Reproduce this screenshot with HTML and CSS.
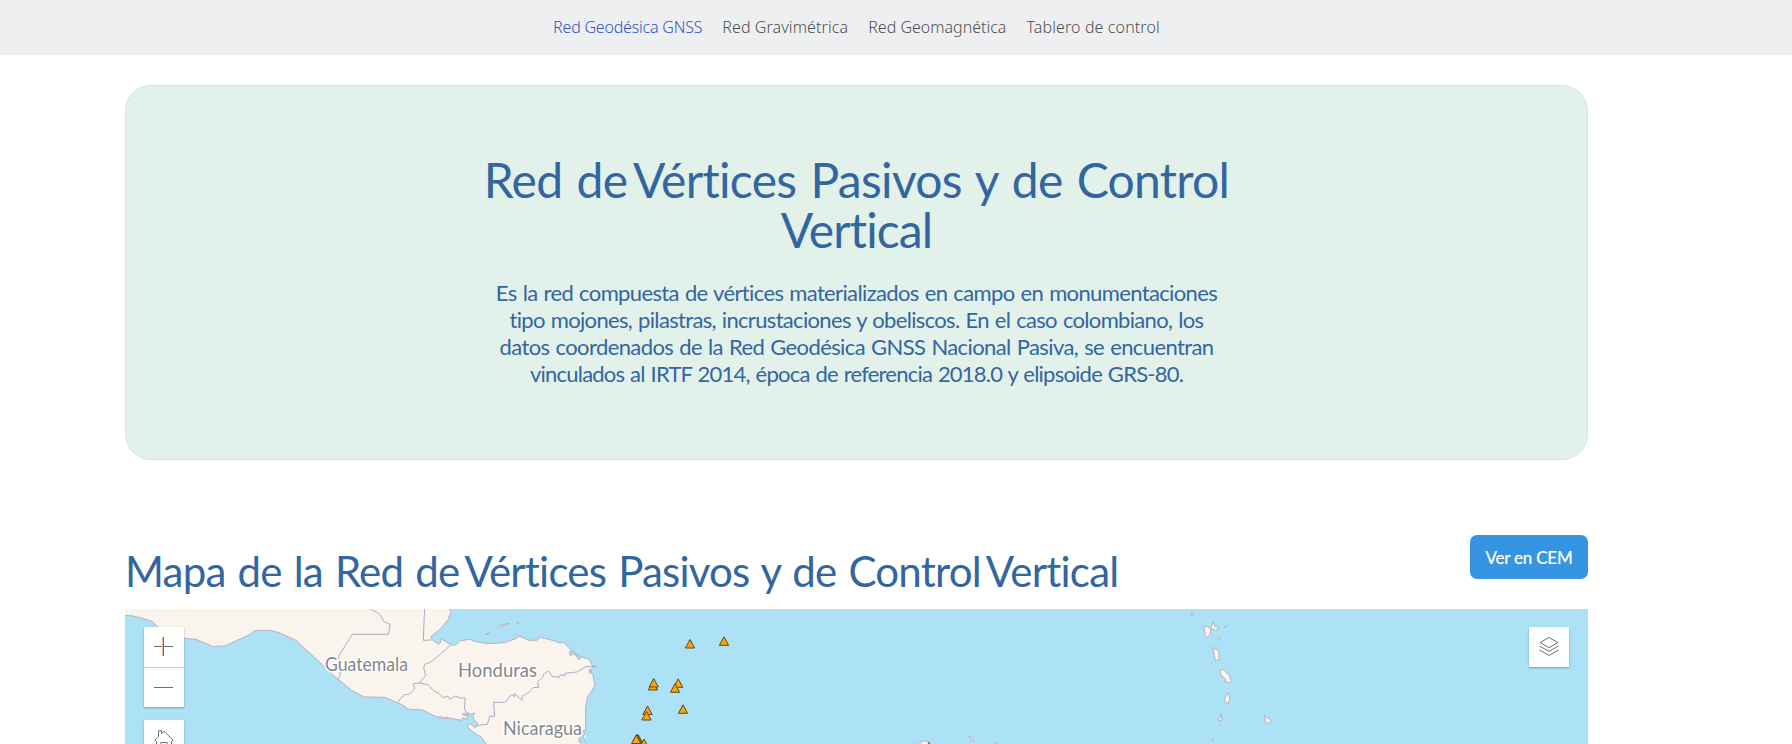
FILE: index.html
```html
<!DOCTYPE html>
<html lang="es">
<head>
<meta charset="utf-8">
<title>Red Geodésica GNSS</title>
<link rel="stylesheet" href="styles.css">
</head>
<body>
<header class="topbar">
  <nav class="nav">
    <a class="nav-link active">Red Geodésica GNSS</a>
    <a class="nav-link grav">Red Gravimétrica</a>
    <a class="nav-link geom">Red Geomagnética</a>
    <a class="nav-link tab">Tablero de control</a>
  </nav>
</header>
<main class="page">
  <section class="hero">
    <h1 class="hero-title"><span class="t1">Red de<span class="tight"> </span>Vértices Pasivos y de Control</span><br><span class="t2">Vertical</span></h1>
    <p class="hero-text"><span class="p1">Es la red compuesta de vértices materializados en campo en monumentaciones</span><br><span class="p2">tipo mojones, pilastras, incrustaciones y obeliscos. En el caso colombiano, los</span><br><span class="p3">datos coordenados de la Red Geodésica GNSS Nacional Pasiva, se encuentran</span><br><span class="p4">vinculados al IRTF 2014, época de referencia 2018.0 y elipsoide GRS-80.</span></p>
  </section>
  <section class="map-section">
    <div class="map-head">
      <h2 class="map-title">Mapa de la Red de<span class="tight"> </span>Vértices Pasivos y de Control<span class="tight"> </span>Vertical</h2>
      <a class="cem-button">Ver en CEM</a>
    </div>
    <div class="map">
      <svg class="map-canvas" viewBox="125 609 1463 135">
        <g transform="translate(340 600) scale(.33333)">
          <g class="land">
            <path d="M-650 20V47L-625 47L-600 53L-563 64L-548 80L-500 108L-468 115L-432 118L-380 140L-362 138L-348 139L-275 106L-255 92L-212 91L-185 97L-132 121L-6 238L35 271L72 291L135 292L172 308L197 320L200 327L248 330L284 348L300 355L325 354L365 361L370 352L380 360L383 348L366 344L371 340L384 345L384 336L391 343L404 339L399 349L402 362L412 368L411 379L403 382L397 375L388 371L382 381L411 405L423 410L445 440H715L725 430L718 426L717 414L726 407L725 394L737 390L737 320L743 291L764 258L759 225L747 215L757 203L769 199L757 197L748 178L721 170L688 146L673 128L655 128L642 122L602 112L590 121L568 121L537 108L527 116L493 128L443 131L402 124L391 118L361 122L345 136L333 134L311 121L302 115L301 129L296 133L274 117L275 108L302 86L324 59L332 38L329 20Z"/>
            <path d="M471 82L482 75L507 70L493 77L483 79L476 85ZM437 103L450 99ZM529 72L536 65L535 71ZM735 397L730 410L738 430M294 351L304 349L312 354L325 352"/>
            <path class="lagoon" d="M688 155L691 168L698 161L708 166L716 180L722 171L697 155ZM748 208L755 211L750 219Z"/>
          </g>
          <g class="border">
            <path d="M-6 238L0 230L0 198L-4 168L37 103H145L151 74L132 65L118 42L88 25M254 20L250 121L274 120M333 134L301 163L271 187L254 193L251 203L257 227L238 249L264 254L282 273L294 278L310 293L324 288L330 298L345 288L361 294L376 294L373 324L380 343M238 249L220 251L224 267L207 283L195 284L182 294L174 308M411 376L442 373L449 349L464 349L461 307L495 307L514 284L524 290L523 280L546 301L547 289L568 276L579 263L597 262L592 247L608 232L611 222L626 213L636 229L658 232L661 224L674 228L675 220L711 216L738 200L769 199"/>
          </g>
        </g>
        <g class="land" transform="translate(1180 600) scale(.33333)">
          <path d="M37 36L41 46L34 45ZM72 78L82 80L92 86L91 102L82 113L76 107ZM92 84L100 66L104 78L119 86L107 91ZM133 82L140 79ZM144 77L147 76ZM114 112L121 113L120 120L113 120ZM98 142L117 153L117 180L106 181ZM120 210L130 209L143 222L147 220L148 229L155 246L151 249L132 243L138 239L123 225ZM147 278L149 298L144 311L132 303L136 291ZM123 341L127 361L117 363L116 356L122 353ZM117 374L120 376ZM95 424L102 419ZM252 346L275 362L266 370L258 368Z"/>
        </g>
        <g class="land" transform="translate(880 700) scale(.33333)">
          <path d="M120 135L120 128L133 122L149 127L158 135ZM99 130L102 131ZM267 108L275 113L282 124L272 122ZM343 126L351 132Z"/>
          <path class="brown" d="M145 126L151 128L149 132L143 131Z"/>
        </g>
        <g class="map-label">
          <text x="325" y="671" textLength="83" lengthAdjust="spacingAndGlyphs">Guatemala</text>
          <text x="458" y="677" textLength="79" lengthAdjust="spacingAndGlyphs">Honduras</text>
          <text x="503" y="735" textLength="79" lengthAdjust="spacingAndGlyphs">Nicaragua</text>
        </g>
        <defs><path id="vertex" d="M0-4.2L4.6 4.3H-4.6Z"/></defs>
        <g class="marker">
          <use href="#vertex" x="690" y="643.7"/><use href="#vertex" x="724" y="641"/>
          <use href="#vertex" x="653" y="685.7"/><use href="#vertex" x="653.7" y="682.7"/>
          <use href="#vertex" x="678.2" y="683"/><use href="#vertex" x="675" y="688"/>
          <use href="#vertex" x="647.5" y="710.2"/><use href="#vertex" x="646.5" y="715.7"/>
          <use href="#vertex" x="683" y="709"/><use href="#vertex" x="638.3" y="739"/>
          <use href="#vertex" x="644" y="743.3"/><use href="#vertex" x="636.8" y="738.5"/><use href="#vertex" x="636.2" y="739.2"/>
        </g>
      </svg>
      <div class="controls">
        <div class="zoom-group">
          <button class="tool" aria-label="Acercar"><svg width="40" height="40"><path d="M10 19.5H29M19.5 10V29"/><path class="orange" d="M18.5 10V29"/></svg></button>
          <button class="tool" aria-label="Alejar"><svg width="40" height="40"><path d="M10 20.5H29"/></svg></button>
        </div>
        <button class="tool home" aria-label="Inicio"><svg width="40" height="40"><path d="M12.5 30V21.5L10.8 20.2L14.5 16.5V10.7H17.5V13.5L20 11.3L29.2 20.2L27.5 21.5V30M16.8 30V22.5H23.2V30"/></svg></button>
      </div>
      <button class="tool layers" aria-label="Capas"><svg width="40" height="40"><path d="M20 10.5L29 15.6L20 20.6L11 15.6ZM10.5 19L20 24.4L29.5 19M10.5 23L20 28.4L29.5 23"/></svg></button>
    </div>
  </section>
</main>
</body>
</html>
```
FILE: styles.css
```css
* { box-sizing: border-box; }
body { margin: 0; height: 744px; overflow: hidden; background: #fff; color: #3366a0; font-family: "Lato", "Gill Sans", sans-serif; }
.topbar { height: 55px; background: #eeeff1; }
.nav { width: 1713px; height: 54px; display: flex; justify-content: center; align-items: center; gap: 20px; font: 300 16px "Noto Sans", sans-serif; color: #505050; }
.nav-link { white-space: nowrap; }
.active { color: #2f54c8; letter-spacing: -.2px; }
.grav { letter-spacing: .1px; }
.tab { letter-spacing: .12px; }
.page { width: 1463px; margin: 30px 0 0 125px; }
.hero { height: 375px; padding-top: 69px; border: 1px solid #d5e2ea; border-radius: 26px; background: #e2f1ea; text-align: center; }
.hero-title { margin: 0; font-weight: 400; font-size: 48px; line-height: 50px; white-space: nowrap; font-variant-ligatures: none; }
.t1 { letter-spacing: -.7px; word-spacing: 2.5px; }
.t2 { letter-spacing: -.9px; }
.tight { word-spacing: -6px; }
.hero-text { margin: 24px 0 0; font-size: 22px; line-height: 27px; white-space: nowrap; font-variant-ligatures: none; }
.p1 { letter-spacing: -.63px; word-spacing: 1px; }
.p2 { letter-spacing: -.67px; word-spacing: 1px; }
.p3 { letter-spacing: -.6px; word-spacing: 1px; }
.p4 { letter-spacing: -.78px; word-spacing: 1px; }
.map-section { margin-top: 75px; }
.map-head { height: 74px; display: flex; justify-content: space-between; align-items: flex-start; }
.map-title { margin: 11px 0 0; font-size: 42px; line-height: 50px; font-weight: 400; white-space: nowrap; font-variant-ligatures: none; letter-spacing: -.77px; word-spacing: 2px; }
.map-title .tight { word-spacing: -5px; }
.cem-button { width: 118px; height: 44px; border-radius: 7px; background: #3695e2; color: #fff; font-size: 17px; line-height: 45px; text-align: center; letter-spacing: -.2px; -webkit-text-stroke: .2px #fff; }
.map { position: relative; height: 135px; overflow: hidden; background: #ade1f5; }
.map-canvas { display: block; width: 1463px; height: 135px; }
.land { fill: #f9f5ed; stroke: #b9afc1; stroke-width: 3; stroke-linejoin: round; }
.land .lagoon { fill: #ade1f5; }
.border { fill: none; stroke: #b1aac5; stroke-width: 3; }
.land .brown { fill: #765d50; stroke: none; }
.map-label { font-size: 19px; fill: #85868a; stroke: #fff; stroke-width: 3px; paint-order: stroke; stroke-linejoin: round; }
.marker { fill: #ffa500; stroke: #584a1d; stroke-width: 1; }
.controls { position: absolute; left: 19px; top: 18px; display: flex; flex-direction: column; gap: 13px; }
.zoom-group { height: 80px; box-shadow: 0 1px 2px rgba(0,0,0,.3); }
.tool { display: block; width: 40px; height: 40px; padding: 0; border: 0; background: #fff; }
.tool svg { display: block; fill: none; stroke: #6e6e6e; stroke-width: 1; }
.zoom-group .tool + .tool { box-shadow: 0 1px #ccc inset; }
.tool .orange { stroke: #eab38b; }
.home, .layers { box-shadow: 0 1px 2px rgba(0,0,0,.3); }
.layers { position: absolute; right: 19px; top: 18px; }
```
